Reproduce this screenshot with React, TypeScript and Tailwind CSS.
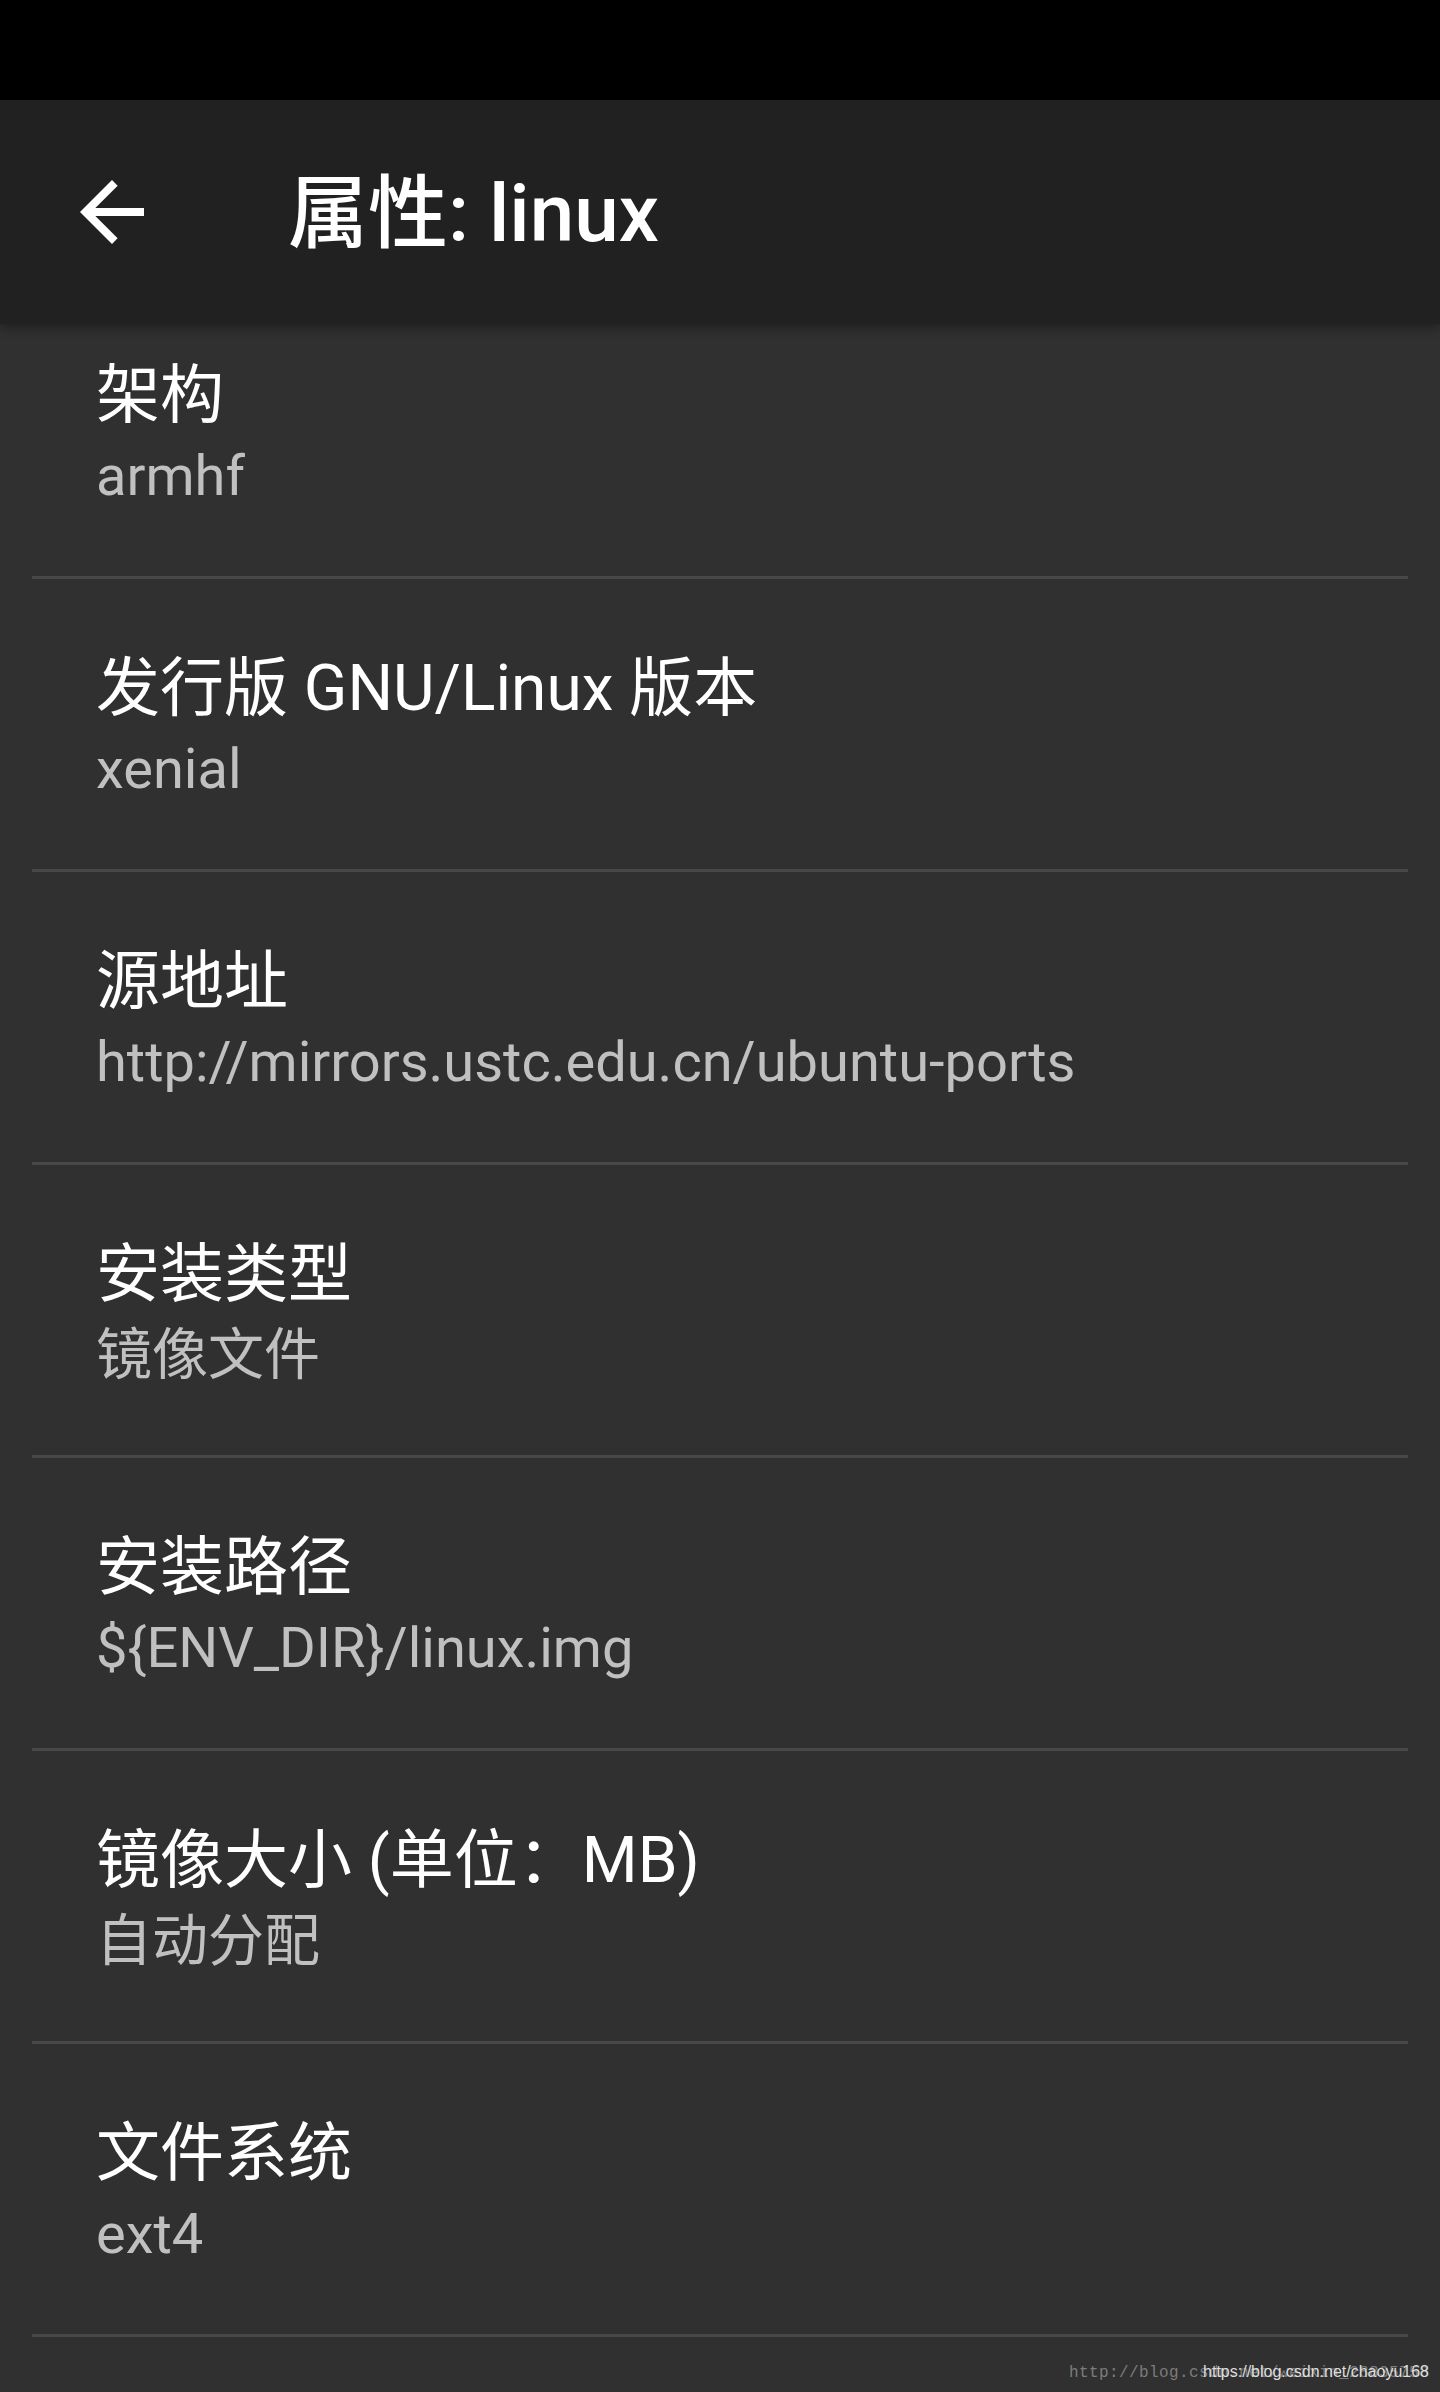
import React from 'react';

interface PrefItem {
  title: string;
  summary: string;
}

const items: PrefItem[] = [
  { title: '架构', summary: 'armhf' },
  { title: '发行版 GNU/Linux 版本', summary: 'xenial' },
  { title: '源地址', summary: 'http://mirrors.ustc.edu.cn/ubuntu-ports' },
  { title: '安装类型', summary: '镜像文件' },
  { title: '安装路径', summary: '${ENV_DIR}/linux.img' },
  { title: '镜像大小 (单位：MB)', summary: '自动分配' },
  { title: '文件系统', summary: 'ext4' },
];

const ArrowBack = () => (
  <svg width="96" height="96" viewBox="0 0 24 24" fill="#ffffff">
    <path d="M20 11H7.83l5.59-5.59L12 4l-8 8 8 8 1.41-1.41L7.83 13H20v-2z" />
  </svg>
);

const PrefRow: React.FC<PrefItem & { first?: boolean }> = ({ title, summary, first }) => (
  <div className={first ? '-mt-[38px]' : ''}>
    <div className="px-[96px] pt-[72px] pb-[67px]">
      <div className="text-[64px] leading-[76px] text-white whitespace-nowrap">{title}</div>
      <div className="mt-[9px] text-[56px] leading-[66px] text-[#c0c0c0] whitespace-nowrap">{summary}</div>
    </div>
    <div className="mx-[32px] h-[3px] bg-[#484848]" />
  </div>
);

export default function App() {
  return (
    <div className="relative flex h-[2392px] flex-col overflow-hidden bg-[#303030] font-[Roboto,'Noto_Sans_CJK_SC',sans-serif]">
      {/* status bar */}
      <div className="h-[100px] shrink-0 bg-black" />

      {/* toolbar */}
      <div className="relative z-10 flex h-[224px] shrink-0 items-center bg-[#212121] shadow-[0_4px_10px_rgba(0,0,0,0.35)]">
        <div className="ml-[64px] flex h-[96px] w-[96px] items-center justify-center">
          <ArrowBack />
        </div>
        <h1 className="ml-[128px] mt-[4px] text-[80px] font-medium leading-[94px] text-white whitespace-nowrap">
          属性: linux
        </h1>
      </div>

      {/* preference list, scrolled a little */}
      <div className="flex-1 overflow-hidden">
        {items.map((it, i) => (
          <PrefRow key={it.title} title={it.title} summary={it.summary} first={i === 0} />
        ))}
      </div>

      {/* blog watermarks, stacked on top of each other */}
      <div className="absolute bottom-[9px] right-[11px] grid items-baseline justify-items-end">
        <span className="col-start-1 row-start-1 font-['Liberation_Mono',monospace] text-[16px] leading-[20px] tracking-[0.4px] text-[#7c7c7c]">
          http://blog.csdn.net/weixin_28835758
        </span>
        <span className="col-start-1 row-start-1 font-['Liberation_Sans',Arial,sans-serif] text-[16px] leading-[20px] text-[#dedede]">
          https://blog.csdn.net/chaoyu168
        </span>
      </div>
    </div>
  );
}
